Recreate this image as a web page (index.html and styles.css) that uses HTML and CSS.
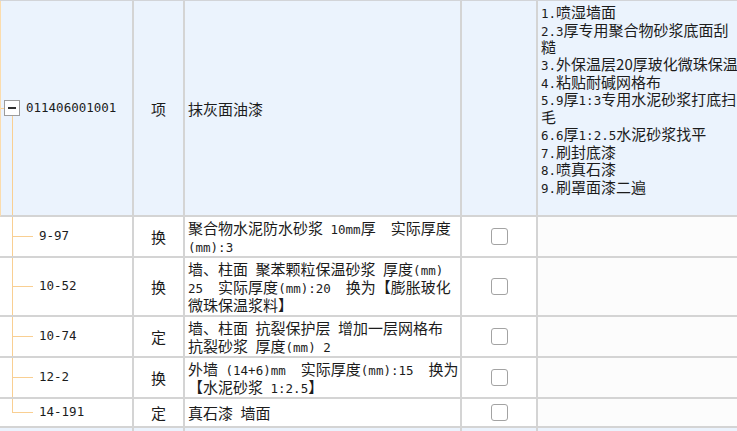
FILE: index.html
```html
<!DOCTYPE html>
<html lang="zh-CN">
<head>
<meta charset="utf-8">
<title>清单</title>
<link rel="stylesheet" href="styles.css">
</head>
<body>
<div class="grid">
  <!-- row 1 -->
  <div class="c c1 hd root">
    <span class="stub"></span>
    <span class="node"><span class="sp"></span><span class="box"><span class="minus"></span></span><span class="down"></span></span>
    <span class="m code">011406001001</span>
  </div>
  <div class="c c2 hd">项</div>
  <div class="c c3 hd"><div class="t">抹灰面油漆</div></div>
  <div class="c c4 hd"></div>
  <div class="c c5 hd feat"><div class="t"><span class="m">1.</span>喷湿墙面<br><span class="m">2.3</span>厚专用聚合物砂浆底面刮<br>糙<br><span class="m">3.</span>外保温层20厚玻化微珠保温<br><span class="m">4.</span>粘贴耐碱网格布<br><span class="m">5.9</span>厚<span class="m">1:3</span>专用水泥砂浆打底扫<br>毛<br><span class="m">6.6</span>厚<span class="m">1:2.5</span>水泥砂浆找平<br><span class="m">7.</span>刷封底漆<br><span class="m">8.</span>喷真石漆<br><span class="m">9.</span>刷罩面漆二遍</div></div>

  <!-- row 2 -->
  <div class="c c1 ch"><span class="twig"></span><span class="m">9-97</span></div>
  <div class="c c2">换</div>
  <div class="c c3 txt"><div class="t">聚合物水泥防水砂浆<span class="m">&nbsp;10mm</span>厚<span class="m">&nbsp;&nbsp;</span>实际厚度<br><span class="m">(mm):3</span></div></div>
  <div class="c c4"><span class="cb"></span></div>
  <div class="c c5"></div>

  <!-- row 3 -->
  <div class="c c1 ch"><span class="twig"></span><span class="m">10-52</span></div>
  <div class="c c2">换</div>
  <div class="c c3 txt"><div class="t">墙、柱面<span class="m">&nbsp;</span>聚苯颗粒保温砂浆<span class="m">&nbsp;</span>厚度<span class="m">(mm)</span><br><span class="m">25&nbsp;&nbsp;</span>实际厚度<span class="m">(mm):20&nbsp;&nbsp;</span>换为【膨胀玻化<br>微珠保温浆料】</div></div>
  <div class="c c4"><span class="cb"></span></div>
  <div class="c c5"></div>

  <!-- row 4 -->
  <div class="c c1 ch"><span class="twig"></span><span class="m">10-74</span></div>
  <div class="c c2">定</div>
  <div class="c c3 txt"><div class="t">墙、柱面<span class="m">&nbsp;</span>抗裂保护层<span class="m">&nbsp;</span>增加一层网格布<br>抗裂砂浆<span class="m">&nbsp;</span>厚度<span class="m">(mm) 2</span></div></div>
  <div class="c c4"><span class="cb"></span></div>
  <div class="c c5"></div>

  <!-- row 5 -->
  <div class="c c1 ch"><span class="twig"></span><span class="m">12-2</span></div>
  <div class="c c2">换</div>
  <div class="c c3 txt"><div class="t">外墙<span class="m">&nbsp;(14+6)mm&nbsp;&nbsp;</span>实际厚度<span class="m">(mm):15&nbsp;&nbsp;</span>换为<br>【水泥砂浆<span class="m">&nbsp;1:2.5</span>】</div></div>
  <div class="c c4"><span class="cb"></span></div>
  <div class="c c5"></div>

  <!-- row 6 -->
  <div class="c c1 ch"><span class="twig last"></span><span class="m">14-191</span></div>
  <div class="c c2">定</div>
  <div class="c c3 txt"><div class="t">真石漆<span class="m">&nbsp;</span>墙面</div></div>
  <div class="c c4"><span class="cb"></span></div>
  <div class="c c5"></div>

  <!-- row 7 (partially visible) -->
  <div class="c c1 hd"></div>
  <div class="c c2 hd"></div>
  <div class="c c3 hd"></div>
  <div class="c c4 hd"></div>
  <div class="c c5 hd"></div>
</div>
</body>
</html>
```

FILE: styles.css
```css
html, body {
  margin: 0;
  padding: 0;
  background: #ffffff;
  overflow: hidden;
}

body {
  font-family: "Noto Sans CJK SC", "Noto Sans CJK TC", sans-serif;
  font-size: 15px;
  color: #1c1c1c;
}

.grid {
  display: grid;
  grid-template-columns: 134px 51px 277px 76px 200px;
  grid-template-rows: 216px 41px 59px 41px 41px 29px 40px;
  border-top: 1px solid #d2d4d8;
  width: 738px;
}

.c {
  box-sizing: border-box;
  border-right: 2px solid #d4d4d4;
  border-bottom: 2px solid #d4d4d4;
  background: #ffffff;
  display: flex;
  align-items: center;
  min-width: 0;
  overflow: hidden;
  white-space: nowrap;
}

.c5 {
  border-right: none;
  background: #fcfcfc;
}

.hd {
  background: #ebf3fd;
}

.c2 {
  justify-content: center;
}

.c3 {
  padding-left: 3px;
}

.t {
  display: block;
}

.txt .t {
  line-height: 18px;
}

.c4 {
  justify-content: center;
}

.m {
  font-family: "DejaVu Sans Mono", "Liberation Mono", monospace;
  font-size: 12.5px;
  line-height: 1;
}

/* root row tree */
.root {
  align-items: stretch;
  border-left: 1px solid #fbdcad;
}

.stub {
  width: 3px;
  align-self: center;
  height: 1px;
  background: #f9cf92;
}

.node {
  display: flex;
  flex-direction: column;
  width: 16px;
}

.sp {
  flex: 1;
}

.box {
  box-sizing: border-box;
  width: 16px;
  height: 16px;
  border: 1px solid #9c9c9c;
  background: #ffffff;
  display: flex;
  align-items: center;
  justify-content: center;
}

.minus {
  width: 8px;
  height: 2px;
  background: #303030;
}

.down {
  flex: 1;
  margin-left: 8px;
  width: 1px;
  background: #f9cf92;
}

.code {
  align-self: center;
  margin-left: 6px;
}

/* child rows tree */
.ch {
  align-items: stretch;
  padding-left: 12px;
}

.ch .m {
  align-self: center;
  margin-left: 6px;
}

.twig {
  width: 21px;
  background:
    linear-gradient(#f9cf92, #f9cf92) 0 0 / 1px 100% no-repeat,
    linear-gradient(#f9cf92, #f9cf92) 0 50% / 100% 1px no-repeat;
}

.twig.last {
  background:
    linear-gradient(#f9cf92, #f9cf92) 0 0 / 1px 50% no-repeat,
    linear-gradient(#f9cf92, #f9cf92) 0 50% / 100% 1px no-repeat;
}

/* checkbox */
.cb {
  box-sizing: border-box;
  width: 17px;
  height: 17px;
  border: 1px solid #a3a3a3;
  border-radius: 3px;
  background: #ffffff;
}

/* features column */
.feat {
  align-items: flex-start;
  padding: 2px 0 0 3px;
}

.feat .t {
  line-height: 17.4px;
}
```
